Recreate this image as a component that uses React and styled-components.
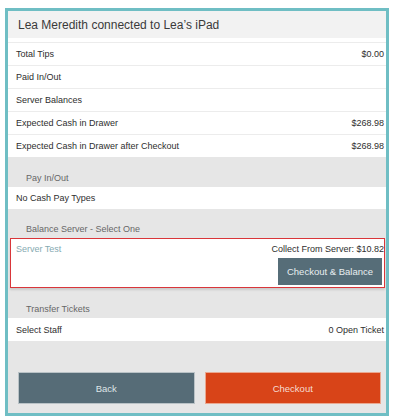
import React from "react";
import styled, { createGlobalStyle } from "styled-components";

const Global = createGlobalStyle`
  *, *::before, *::after {
    box-sizing: border-box;
  }
  body {
    margin: 0;
    background: #ffffff;
    font-family: "Liberation Sans", Arial, sans-serif;
  }
`;

const Frame = styled.div`
  margin: 8px 0 0 5px;
  width: 384px;
  height: 408px;
  border: 3px solid #6fbec4;
  background: #e6e6e6;
  display: flex;
  flex-direction: column;
  overflow: hidden;
`;

const Header = styled.div`
  height: 27px;
  background: #f2f2f2;
  display: flex;
  align-items: center;
  padding-left: 10px;
  font-size: 12px;
  color: #3a3a3a;
  box-shadow: 0 1px 2px rgba(0, 0, 0, 0.04);
`;

const Gap = styled.div`
  height: 4px;
  background: #ffffff;
`;

const Row = styled.div`
  flex: none;
  height: ${({ h }) => h || 22}px;
  background: #ffffff;
  border-top: ${({ first }) => (first ? "none" : "1px solid #ececec")};
  display: flex;
  align-items: center;
  justify-content: space-between;
  padding: 0 2px 0 8px;
  font-size: 9px;
  color: #2e2e2e;
`;

const Section = styled.div`
  flex: none;
  height: ${({ h }) => h}px;
  display: flex;
  align-items: flex-end;
  padding: 0 0 ${({ pb }) => pb}px 18px;
  font-size: 9px;
  color: #666666;
`;

const Card = styled.div`
  flex: none;
  margin: 0 1px 0 2px;
  height: 50px;
  background: #ffffff;
  border: 1px solid #d9363a;
  box-shadow: 0 2px 2px rgba(0, 0, 0, 0.12);
  display: flex;
  flex-direction: column;
`;

const CardTop = styled.div`
  display: flex;
  justify-content: space-between;
  align-items: center;
  height: 19px;
  padding: 0 0 0 5px;
  font-size: 9px;
`;

const ServerName = styled.span`
  color: #86aab2;
`;

const Collect = styled.span`
  color: #2e2e2e;
`;

const CardBottom = styled.div`
  display: flex;
  justify-content: flex-end;
  padding-right: 2px;
`;

const SmallButton = styled.button`
  width: 104px;
  height: 27px;
  border: none;
  background: #566d78;
  color: #e9eef0;
  font-family: inherit;
  font-size: 9.5px;
  padding: 0;
`;

const Footer = styled.div`
  flex: 1;
  display: flex;
  align-items: flex-end;
  gap: 10px;
  padding: 0 5px 9px 10px;
`;

const BigButton = styled.button`
  flex: 1;
  height: 32px;
  border: 1px solid ${({ primary }) => (primary ? "#eaa890" : "#b9c2c6")};
  background: ${({ primary }) => (primary ? "#d84418" : "#566c77")};
  color: ${({ primary }) => (primary ? "#f6dcd2" : "#dfe5e8")};
  font-family: inherit;
  font-size: 9.5px;
  padding: 0;
`;

const stats = [
  ["Total Tips", "$0.00"],
  ["Paid In/Out", ""],
  ["Server Balances", ""],
  ["Expected Cash in Drawer", "$268.98"],
  ["Expected Cash in Drawer after Checkout", "$268.98"],
];

export default function App() {
  return (
    <>
      <Global />
      <Frame>
        <Header>Lea Meredith connected to Lea’s iPad</Header>
        <Gap />
        {stats.map(([label, value]) => (
          <Row key={label} h={23}>
            <span>{label}</span>
            <span>{value}</span>
          </Row>
        ))}
        <Section h={30} pb={4}>Pay In/Out</Section>
        <Row first>No Cash Pay Types</Row>
        <Section h={29} pb={4}>Balance Server - Select One</Section>
        <Card>
          <CardTop>
            <ServerName>Server Test</ServerName>
            <Collect>Collect From Server: $10.82</Collect>
          </CardTop>
          <CardBottom>
            <SmallButton>Checkout &amp; Balance</SmallButton>
          </CardBottom>
        </Card>
        <Section h={30} pb={4}>Transfer Tickets</Section>
        <Row first h={23}>
          <span>Select Staff</span>
          <span>0 Open Ticket</span>
        </Row>
        <Footer>
          <BigButton>Back</BigButton>
          <BigButton primary>Checkout</BigButton>
        </Footer>
      </Frame>
    </>
  );
}
